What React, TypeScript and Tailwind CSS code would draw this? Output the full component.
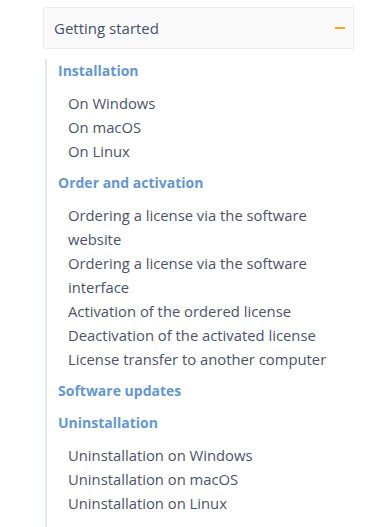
import React from "react";

const sections: { title: string; items: string[] }[] = [
  { title: "Installation", items: ["On Windows", "On macOS", "On Linux"] },
  {
    title: "Order and activation",
    items: [
      "Ordering a license via the software website",
      "Ordering a license via the software interface",
      "Activation of the ordered license",
      "Deactivation of the activated license",
      "License transfer to another computer",
    ],
  },
  { title: "Software updates", items: [] },
  {
    title: "Uninstallation",
    items: [
      "Uninstallation on Windows",
      "Uninstallation on macOS",
      "Uninstallation on Linux",
    ],
  },
];

export default function App() {
  return (
    <div
      className="w-[385px] h-[527px] bg-white overflow-hidden pt-[7px] pl-[43px]"
      style={{ fontFamily: '"Open Sans", "Liberation Sans", sans-serif' }}
    >
      <div className="w-[311px]">
        <div className="h-[42px] border border-[#ededed] bg-[#fafafa] flex items-center justify-between pl-[10px] pr-[8px]">
          <span className="text-[15px] text-[#44526a]">Getting started</span>
          <span className="block w-[10px] h-[2px] bg-[#f5a623]" />
        </div>
        <div className="mt-[10px] ml-[2px] border-l-2 border-[#e3e9f0] pl-[11px] flex flex-col gap-2 pb-[20px]">
          {sections.map((s) => (
            <div key={s.title} className="flex flex-col gap-2">
              <div className="text-[14px] leading-[24px] font-bold text-[#6497d0]">
                {s.title}
              </div>
              {s.items.length > 0 && (
                <ul className="pl-[10px] flex flex-col">
                  {s.items.map((it) => (
                    <li
                      key={it}
                      className="text-[14.8px] leading-[24px] text-[#4a5468]"
                    >
                      {it}
                    </li>
                  ))}
                </ul>
              )}
            </div>
          ))}
        </div>
      </div>
    </div>
  );
}
